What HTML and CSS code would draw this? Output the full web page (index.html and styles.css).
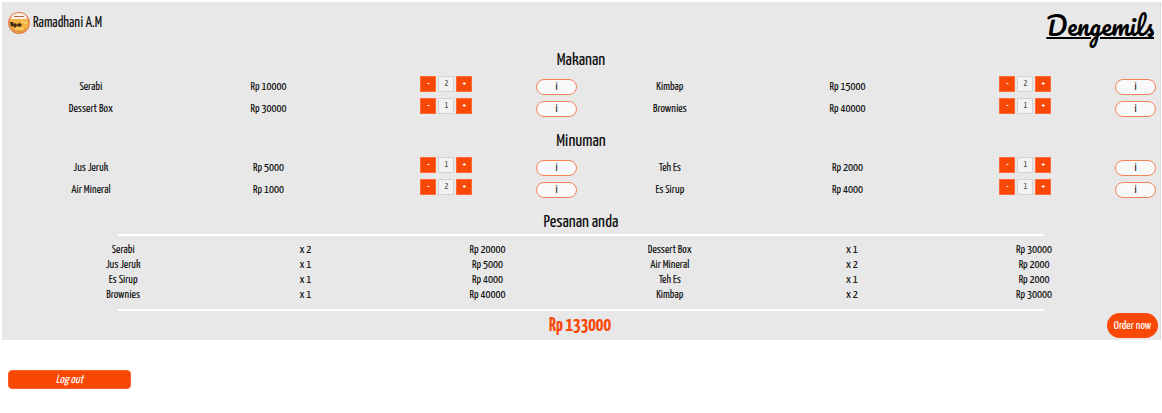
FILE: index.html
```html
<!DOCTYPE html>
<html lang="id">
<head>
<meta charset="utf-8">
<title>Dengemils</title>
<link rel="stylesheet" href="styles.css">
</head>
<body>
<main class="panel">
  <header class="top">
    <div class="user">
      <svg class="avatar" viewBox="0 0 22 22" aria-hidden="true">
        <circle cx="11" cy="11" r="10.3" fill="#efb94b" stroke="#e87b50" stroke-width="1.2"/>
        <path d="M2.500 7Q4 1 11 1Q18 1 19.500 7Z" fill="#fff0e4"/>
        <path d="M6 4.500h10" stroke="#b8694a" stroke-width="1"/>
        <path d="M2 9l4-2 5 1 2-1 5 1 2 4-3 5-7 2-6-4z" fill="#f3b33c"/>
        <path d="M2 10l3 0 1 2 2-1 1 3-2 2-2-2-2 1zM9 12l3-1 2 2-2 2-3-1z" fill="#4b2c18"/>
        <path d="M13 7l3 4 3 0M7 17l5-1 4 1" stroke="#f9df99" fill="none"/>
        <path d="M4 16l3 3 7 1 4-4" stroke="#dc8040" fill="none"/>
      </svg>
      <span>Ramadhani A.M</span>
    </div>
    <a class="brand" href="#">Dengemils</a>
  </header>
  <h2 class="title">Makanan</h2>
  <table class="menu" aria-label="Makanan"><tbody id="food"></tbody></table>
  <h2 class="title">Minuman</h2>
  <table class="menu" aria-label="Minuman"><tbody id="drinks"></tbody></table>
  <h2 class="title">Pesanan anda</h2>
  <hr class="rule">
  <table class="summary" aria-label="Pesanan anda">
    <tbody>
      <tr><td>Serabi</td><td>x 2</td><td>Rp 20000</td><td>Dessert Box</td><td>x 1</td><td>Rp 30000</td></tr>
      <tr><td>Jus Jeruk</td><td>x 1</td><td>Rp 5000</td><td>Air Mineral</td><td>x 2</td><td>Rp 2000</td></tr>
      <tr><td>Es Sirup</td><td>x 1</td><td>Rp 4000</td><td>Teh Es</td><td>x 1</td><td>Rp 2000</td></tr>
      <tr><td>Brownies</td><td>x 1</td><td>Rp 40000</td><td>Kimbap</td><td>x 2</td><td>Rp 30000</td></tr>
    </tbody>
  </table>
  <hr class="rule">
  <footer class="checkout">
    <strong class="total">Rp 133000</strong>
    <button class="order" type="button">Order now</button>
  </footer>
</main>
<button class="logout" type="button">Log out</button>
<script src="menu.js"></script>
</body>
</html>
```
FILE: styles.css
```css
* { box-sizing: border-box; }
body {
  margin: 0;
  padding: 2px 1px 2px 2px;
  background: #fff;
  color: #111;
  font: 12px/16px "Yanone Kaffeesatz", "Open Sans Condensed Light", "Roboto Condensed", sans-serif;
}
button, input { font: inherit; }
.panel { background: #e8e8e8; border-right: 1px solid #d8d8d8; }
.top {
  display: flex;
  justify-content: space-between;
  align-items: flex-start;
  height: 46px;
  padding: 7px 6px 0 6px;
}
.user { display: flex; align-items: center; gap: 3px; margin-top: 3px; font-size: 15px; }
.avatar { width: 22px; height: 22px; }
.brand {
  color: #000;
  font: 400 25px/32px Pacifico, "Dancing Script", cursive;
  text-decoration: underline;
  text-decoration-thickness: 2px;
}
.title { margin: 0; padding-top: 2px; text-align: center; font-size: 18px; line-height: 22px; font-weight: 400; }
table { border-collapse: collapse; table-layout: fixed; width: 100%; text-align: center; }
td { padding: 0; }
.menu { margin: 2px 0 11px; }
.menu td { width: 15.35%; height: 22px; padding-top: 3px; vertical-align: middle; }
.menu td:nth-child(4n) { width: 3.95%; padding: 1px 3px 0 0; }
.menu td:nth-child(4n + 3) { padding-top: 1px; }
.stepper { display: flex; justify-content: center; gap: 2px; margin-bottom: 3px; }
.step, .count { width: 16px; height: 16px; padding: 0; font-size: 9px; line-height: 12px; text-align: center; }
.step { border: 1px solid #ff6a35; background: #f94706; color: #fff; font-weight: 700; }
.count { border: 1px solid #d2d2d2; background: #f2f2f2; color: #555; }
.info {
  display: block;
  width: 41px;
  height: 16px;
  margin: 2px auto 0;
  padding: 0;
  border: 1px solid #f58258;
  border-radius: 8px;
  background: #f9f9f9;
  color: #222;
  line-height: 12px;
}
.rule { width: 80%; height: 2px; margin: 0 auto; border: 0; background: #fff; }
.summary { width: 94.4%; margin: 6px auto 7px 2.6%; }
.summary td { height: 15px; line-height: 15px; }
.checkout { display: grid; grid-template-columns: 1fr auto 1fr; align-items: center; padding: 2px 2px 2px 0; }
.total { grid-column: 2; color: #f94706; font-size: 19px; line-height: 24px; }
.order {
  justify-self: end;
  width: 51px;
  height: 25px;
  padding: 0;
  border: 0;
  border-radius: 13px;
  background: #f94706;
  color: #fff;
}
.logout {
  display: block;
  width: 123px;
  height: 19px;
  margin: 30px 6px 0;
  padding: 0;
  border: 1px solid #ff602a;
  border-radius: 4px;
  background: #f94706;
  color: #fff;
  font-style: italic;
}
```
FILE: menu.js
```js
const menus = {
  food: [
    [["Serabi", 10000, 2], ["Kimbap", 15000, 2]],
    [["Dessert Box", 30000, 1], ["Brownies", 40000, 1]]
  ],
  drinks: [
    [["Jus Jeruk", 5000, 1], ["Teh Es", 2000, 1]],
    [["Air Mineral", 1000, 2], ["Es Sirup", 4000, 1]]
  ]
};

const cells = ([name, price, count]) => `
  <td>${name}</td>
  <td>Rp ${price}</td>
  <td><div class="stepper">
    <button class="step" type="button" aria-label="Kurangi ${name}">-</button>
    <input class="count" type="text" value="${count}" aria-label="Jumlah ${name}">
    <button class="step" type="button" aria-label="Tambah ${name}">+</button>
  </div></td>
  <td><button class="info" type="button" aria-label="Info ${name}">i</button></td>`;

for (const [id, rows] of Object.entries(menus)) {
  document.getElementById(id).innerHTML =
    rows.map(row => `<tr>${row.map(cells).join("")}</tr>`).join("");
}
```
